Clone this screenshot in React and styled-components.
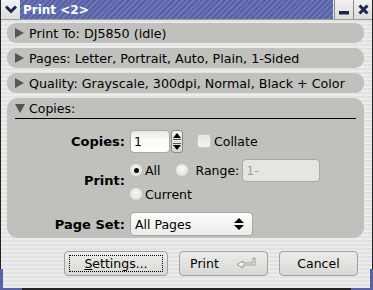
import React from "react";
import styled, { createGlobalStyle } from "styled-components";

const Global = createGlobalStyle`
  html, body { margin: 0; padding: 0; background: #fff; }
  body { font-family: "DejaVu Sans", "Liberation Sans", sans-serif; font-size: 12px; color: #000; }
`;

const Window = styled.div`
  width: 373px;
  height: 290px;
  box-sizing: border-box;
  border-left: 1px solid #222;
  border-right: 1px solid #222;
  border-bottom: 2px solid #222;
  display: flex;
  flex-direction: column;
  background: repeating-linear-gradient(
    180deg,
    #e2e2e2 0px,
    #e2e2e2 2px,
    #ececec 2px,
    #ececec 4px
  );
  position: relative;
`;

const TitleBar = styled.div`
  height: 19px;
  display: flex;
  border-bottom: 1px solid #9a9a9a;
`;

const TitleButton = styled.div`
  width: ${(p) => p.$w || 18}px;
  background: linear-gradient(#f2f2f2, #dcdcdc);
  display: flex;
  align-items: center;
  justify-content: center;
  border-left: ${(p) => (p.$sep ? "1px solid #888" : "none")};
`;

const TitleText = styled.div`
  flex: 1;
  background: repeating-linear-gradient(
    135deg,
    #5860a6 0px,
    #5860a6 2px,
    #6c74b8 2px,
    #6c74b8 4px
  );
  color: #fff;
  font-weight: bold;
  font-size: 12px;
  display: flex;
  align-items: center;
  padding-left: 3px;
  margin-right: 1px;
`;

const Body = styled.div`
  flex: 1;
  display: flex;
  flex-direction: column;
  padding: 3px 8px 0 6px;
  gap: 5px;
`;

const Expander = styled.div`
  height: 20px;
  border-radius: 9px;
  background: #c0c0bc;
  display: flex;
  align-items: center;
  padding-left: 8px;
  gap: 5px;
  font-size: 12.7px;
`;

const Arrow = styled.span`
  width: 0;
  height: 0;
  border-top: 5px solid transparent;
  border-bottom: 5px solid transparent;
  border-left: 9px solid #555;
`;

const DownArrow = styled.span`
  width: 0;
  height: 0;
  border-left: 5px solid transparent;
  border-right: 5px solid transparent;
  border-top: 9px solid #555;
`;

const Panel = styled.div`
  height: 140px;
  border-radius: 11px;
  background: #c0c0bc;
  padding: 0 8px;
  box-sizing: border-box;
`;

const PanelHead = styled.div`
  height: 19px;
  display: flex;
  align-items: center;
  gap: 4px;
  border-bottom: 1px solid #000;
  font-size: 12.5px;
  margin-top: 1px;
`;

const Form = styled.div`
  display: grid;
  grid-template-columns: 110px 1fr;
  column-gap: 5px;
  margin-top: 8px;
`;

const Label = styled.div`
  font-weight: bold;
  font-size: 13px;
  text-align: right;
  align-self: center;
`;

const Controls = styled.div`
  display: flex;
  align-items: center;
  gap: ${(p) => p.$gap || 0}px;
  height: ${(p) => p.$h || 24}px;
`;

const Stack = styled.div`
  display: flex;
  flex-direction: column;
  padding-top: 2px;
`;

const Field = styled.div`
  width: ${(p) => p.$w}px;
  height: 23px;
  box-sizing: border-box;
  border: 1px solid #a8a8a4;
  border-radius: 4px;
  margin-left: ${(p) => p.$ml || 0}px;
  background: ${(p) =>
    p.$disabled ? "#e6e6e0" : "linear-gradient(#e8e8e2, #fafaf6 40%, #fff)"};
  color: ${(p) => (p.$disabled ? "#a0a098" : "#000")};
  display: flex;
  align-items: center;
  padding-left: 3px;
  font-size: 12.5px;
`;

const Spin = styled.div`
  width: 12px;
  height: 23px;
  margin-left: 1px;
  border: 1px solid #888;
  border-radius: 3px;
  box-sizing: border-box;
  background: linear-gradient(#f4f4f4, #d4d4d4);
  display: flex;
  flex-direction: column;
  align-items: center;
  justify-content: space-between;
  padding: 2px 0;
`;

const Tri = styled.span`
  width: 0;
  height: 0;
  border-left: 4px solid transparent;
  border-right: 4px solid transparent;
  ${(p) => (p.$up ? "border-bottom" : "border-top")}: 5px solid #000;
`;

const Bars = styled.span`
  width: 8px;
  height: 3px;
  border-top: 1px solid #555;
  border-bottom: 1px solid #555;
`;

const CheckOpt = styled.label`
  display: flex;
  align-items: center;
  gap: 3px;
  margin-left: 14px;
  font-size: 12.5px;
`;

const Check = styled.span`
  width: 12px;
  height: 12px;
  border-radius: 3px;
  border: 1px solid #c8c8c4;
  background: linear-gradient(#e4e4e0, #f4f4f2);
`;

const Radio = styled.span`
  width: 12px;
  height: 12px;
  border-radius: 50%;
  background: radial-gradient(circle at 50% 40%, #fafafa, #d8d8d4);
  display: flex;
  align-items: center;
  justify-content: center;
  &::after {
    content: "";
    width: 5px;
    height: 5px;
    border-radius: 50%;
    background: ${(p) => (p.$on ? "#000" : "transparent")};
  }
`;

const Opt = styled.label`
  display: flex;
  align-items: center;
  gap: ${(p) => p.$gap || 3}px;
  margin-left: ${(p) => p.$ml || 0}px;
  font-size: 12.5px;
`;

const Select = styled.div`
  width: 123px;
  height: 24px;
  box-sizing: border-box;
  border: 1px solid #a8a8a4;
  border-radius: 4px;
  background: linear-gradient(#fcfcfc, #ececea);
  display: flex;
  align-items: center;
  justify-content: space-between;
  padding: 0 8px 0 4px;
  font-size: 12.5px;
`;

const Buttons = styled.div`
  display: flex;
  justify-content: flex-end;
  gap: 11px;
  padding: 8px 6px 0 0;
`;

const Button = styled.div`
  width: ${(p) => p.$w}px;
  height: 25px;
  box-sizing: border-box;
  border: 1px solid #a0a09c;
  border-radius: 4px;
  background: linear-gradient(#ececea, #d8d8d4);
  display: flex;
  align-items: center;
  justify-content: center;
  gap: 16px;
  font-size: 12.5px;
  padding: 3px 4px;
`;

const Focus = styled.span`
  flex: 1;
  align-self: stretch;
  border: 1px dotted #000;
  display: flex;
  align-items: center;
  justify-content: center;
`;

const Corner = styled.div`
  position: absolute;
  bottom: -2px;
  ${(p) => (p.$right ? "right: -1px;" : "left: -1px;")}
  width: 22px;
  height: 21px;
  box-sizing: border-box;
  border-bottom: 2px solid #5860a6;
  ${(p) => (p.$right ? "border-right" : "border-left")}: 3px solid #5860a6;
`;

export default function App() {
  return (
    <>
      <Global />
      <Window>
        <TitleBar>
          <TitleButton $w={19}>
            <svg width="12" height="9" viewBox="0 0 12 9">
              <path d="M1 1.5 L6 6.5 L11 1.5" stroke="#1c2550" strokeWidth="3" fill="none" />
            </svg>
          </TitleButton>
          <TitleText>Print &lt;2&gt;</TitleText>
          <TitleButton $sep>
            <svg width="10" height="10" viewBox="0 0 10 10">
              <rect x="0" y="6" width="10" height="3.5" fill="#1c2550" />
            </svg>
          </TitleButton>
          <TitleButton $sep>
            <svg width="11" height="11" viewBox="0 0 11 11">
              <path d="M1.5 1.5 L9.5 9.5 M9.5 1.5 L1.5 9.5" stroke="#1c2550" strokeWidth="3" />
            </svg>
          </TitleButton>
        </TitleBar>
        <Body>
          <Expander><Arrow />Print To: DJ5850 (idle)</Expander>
          <Expander><Arrow />Pages: Letter, Portrait, Auto, Plain, 1-Sided</Expander>
          <Expander><Arrow />Quality: Grayscale, 300dpi, Normal, Black + Color</Expander>
          <Panel>
            <PanelHead><DownArrow />Copies:</PanelHead>
            <Form>
              <Label>Copies:</Label>
              <Controls $h={28}>
                <Field $w={40}>1</Field>
                <Spin><Tri $up /><Bars /><Tri /></Spin>
                <CheckOpt><Check />Collate</CheckOpt>
              </Controls>
              <Label>Print:</Label>
              <Stack>
                <Controls $h={26}>
                  <Opt><Radio $on />All</Opt>
                  <Opt $ml={15} $gap={8}><Radio />Range:</Opt>
                  <Field $w={78} $disabled $ml={3}>1-</Field>
                </Controls>
                <Controls $h={22}>
                  <Opt><Radio />Current</Opt>
                </Controls>
              </Stack>
              <Label>Page Set:</Label>
              <Controls $h={38}>
                <Select>
                  All Pages
                  <svg width="10" height="12" viewBox="0 0 10 12">
                    <path d="M5 0 L10 5 L0 5 Z M0 7 L10 7 L5 12 Z" fill="#000" />
                  </svg>
                </Select>
              </Controls>
            </Form>
          </Panel>
          <Buttons>
            <Button $w={104}>
              <Focus><u>S</u>ettings...</Focus>
            </Button>
            <Button $w={89}>
              Print
              <svg width="22" height="14" viewBox="0 0 22 14">
                <path d="M20 1 V8 H8 V11 L2 7.5 L8 4 V6 H18 V1 Z" fill="#f4f4f4" stroke="#9a9a96" strokeWidth="1" />
              </svg>
            </Button>
            <Button $w={79}>Cancel</Button>
          </Buttons>
        </Body>
        <Corner />
        <Corner $right />
      </Window>
    </>
  );
}
